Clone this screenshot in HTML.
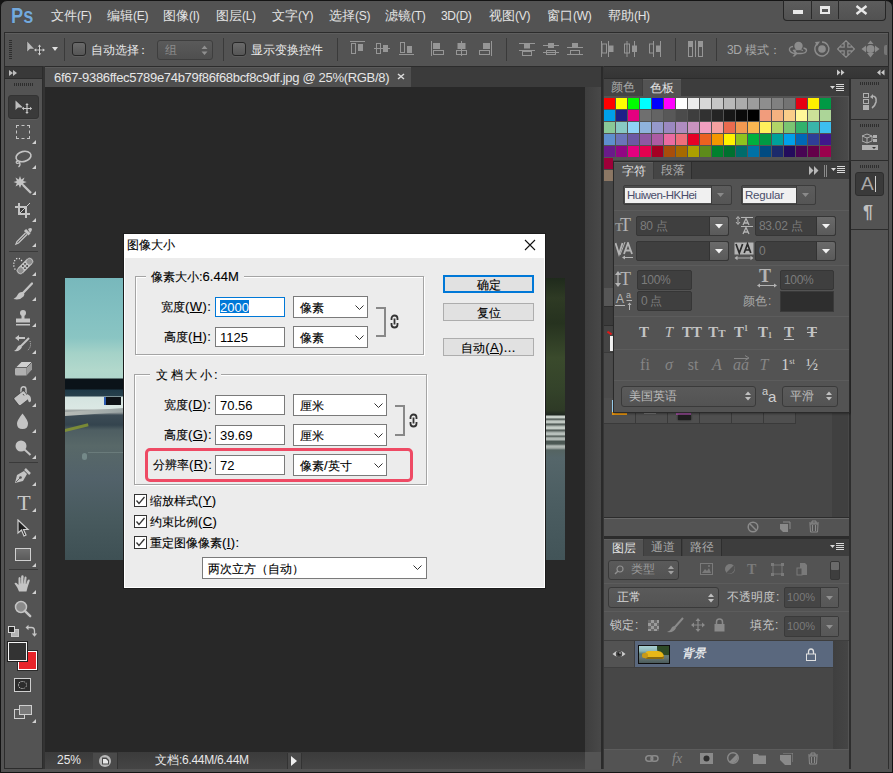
<!DOCTYPE html>
<html><head><meta charset="utf-8"><style>
*{margin:0;padding:0;box-sizing:border-box}
html,body{width:893px;height:773px;overflow:hidden;background:#141414;font-family:"Liberation Sans",sans-serif}
.a{position:absolute}
.menu{position:absolute;top:8px;font-size:13px;color:#e4e4e4;white-space:nowrap;line-height:16px}
.lat{font-family:"Liberation Sans",sans-serif;font-size:12px;letter-spacing:-0.3px}
.otxt{position:absolute;font-size:12px;line-height:20px;color:#e8e8e8;white-space:nowrap}
.cb{width:14px;height:14px;border:1px solid #262626;border-radius:3px;background:linear-gradient(#6a6a6a,#565656);box-shadow:0 1px 0 #5e5e5e}
.tab{height:17px;font-size:12px;line-height:16px;text-align:center;white-space:nowrap}
.dtx{font-size:12px;line-height:16px;color:#000;white-space:nowrap;-webkit-text-stroke:0.12px #000}
.dtx .dl{letter-spacing:0.4px}
.dl{font-family:"Liberation Sans",sans-serif;font-size:13px;line-height:16px;white-space:nowrap}
u{text-decoration-thickness:1px;text-underline-offset:1px}
</style></head><body>
<div class="a" style="left:0;top:0;width:893px;height:773px;background:#535353;border:1px solid #141414;border-radius:7px 7px 0 0"></div>
<div class="a" style="left:11px;top:3px;font:bold 22px/25px 'Liberation Sans',sans-serif;color:#74a9dc;letter-spacing:0px;transform:scaleX(0.83);transform-origin:left;text-shadow:0 0 1px #3a3a3a">Ps</div>
<div class="menu" style="left:51px">文件<span class="lat">(F)</span></div>
<div class="menu" style="left:107px">编辑<span class="lat">(E)</span></div>
<div class="menu" style="left:163px">图像<span class="lat">(I)</span></div>
<div class="menu" style="left:216px">图层<span class="lat">(L)</span></div>
<div class="menu" style="left:272px">文字<span class="lat">(Y)</span></div>
<div class="menu" style="left:329px">选择<span class="lat">(S)</span></div>
<div class="menu" style="left:385px">滤镜<span class="lat">(T)</span></div>
<div class="menu" style="left:441px"><span class="lat">3D(D)</span></div>
<div class="menu" style="left:489px">视图<span class="lat">(V)</span></div>
<div class="menu" style="left:547px">窗口<span class="lat">(W)</span></div>
<div class="menu" style="left:608px">帮助<span class="lat">(H)</span></div>
<div class="a" style="left:783px;top:0px;width:103px;height:21px;border:1px solid #262626;border-top-color:#1a1a1a;border-radius:0 0 4px 4px;background:linear-gradient(#5c5c5c,#525252)"></div>
<div class="a" style="left:811px;top:0;width:1px;height:19px;background:#2a2a2a"></div>
<div class="a" style="left:838px;top:0;width:1px;height:19px;background:#2a2a2a"></div>
<div class="a" style="left:793px;top:10px;width:10px;height:4px;background:#e8e8e8"></div>
<div class="a" style="left:820px;top:6px;width:10px;height:8px;border:2px solid #e8e8e8;border-top-width:3px"></div>
<svg class="a" style="left:855px;top:5px" width="13" height="10"><path d="M1.5 1 L11.5 9 M11.5 1 L1.5 9" stroke="#e8e8e8" stroke-width="2.4"/></svg>
<div class="a" style="left:4px;top:32px;width:885px;height:35px;background:#535353;border:1px solid #2c2c2c"></div>
<div class="a" style="left:5px;top:33px;width:883px;height:1px;background:#5e5e5e"></div>
<div class="a" style="left:9px;top:40px;width:3px;height:20px;background:repeating-linear-gradient(180deg,#2e2e2e 0 1px,transparent 1px 2px)"></div>
<svg class="a" style="left:26px;top:40px" width="20" height="18"><path d="M1 1 L1 12 L4 9 L8.5 9 Z" fill="#bcbcbc" stroke="#3a3a3a" stroke-width="0.4"/><path d="M13.5 6 V14 M9.5 10 H17.5" stroke="#2e2e2e" stroke-width="2.6"/><path d="M13.5 6 V14 M9.5 10 H17.5" stroke="#cfcfcf" stroke-width="1.2"/><path d="M13.5 4.5 L11.8 6.8 H15.2Z M13.5 15.5 L11.8 13.2 H15.2Z M8 10 L10.3 8.3 V11.7Z M19 10 L16.7 8.3 V11.7Z" fill="#cfcfcf"/></svg>
<svg class="a" style="left:52px;top:47px" width="7" height="5"><path d="M0 0 H6 L3 4Z" fill="#e0e0e0"/></svg>
<div class="a" style="left:64px;top:38px;width:1px;height:23px;background:#3a3a3a"></div>
<div class="a cb" style="left:72px;top:42px"></div>
<div class="otxt" style="left:91px;top:40px">自动选择<span style="margin-left:-2px">：</span></div>
<div class="a" style="left:157px;top:40px;width:56px;height:20px;border:1px solid #3e3e3e;border-radius:3px;background:linear-gradient(#5a5a5a,#4f4f4f)"></div>
<div class="otxt" style="left:165px;top:40px;color:#8c8c8c">组</div>
<svg class="a" style="left:201px;top:45px" width="7" height="11"><path d="M0.5 4 L3.5 0.5 L6.5 4Z M0.5 6.5 L3.5 10 L6.5 6.5Z" fill="#909090"/></svg>
<div class="a" style="left:223px;top:38px;width:1px;height:23px;background:#3a3a3a"></div>
<div class="a cb" style="left:232px;top:42px"></div>
<div class="otxt" style="left:251px;top:40px">显示变换控件</div>
<div class="a" style="left:337px;top:38px;width:1px;height:23px;background:#3a3a3a"></div>
<svg class="a" style="left:350px;top:41px" width="17" height="17"><path d="M0 0.5H15" stroke="#969696"/><rect x="1.5" y="2.5" width="4" height="10" fill="none" stroke="#969696"/><rect x="8" y="3" width="5" height="7" fill="#969696"/></svg>
<svg class="a" style="left:374px;top:41px" width="17" height="17"><path d="M0 7.5H16" stroke="#969696"/><rect x="2.5" y="2.5" width="4" height="10" fill="none" stroke="#969696"/><rect x="9" y="4" width="5" height="7" fill="#969696"/></svg>
<svg class="a" style="left:399px;top:41px" width="17" height="17"><path d="M0 13.5H15" stroke="#969696"/><rect x="1.5" y="1.5" width="4" height="10" fill="none" stroke="#969696"/><rect x="8" y="5" width="5" height="7" fill="#969696"/></svg>
<svg class="a" style="left:431px;top:41px" width="17" height="17"><path d="M0.5 0V15" stroke="#969696"/><rect x="2.5" y="9.5" width="10" height="4" fill="none" stroke="#969696"/><rect x="2" y="2" width="7" height="6" fill="#969696"/></svg>
<svg class="a" style="left:455px;top:41px" width="17" height="17"><path d="M6.5 0V15" stroke="#969696"/><rect x="1.5" y="9.5" width="10" height="4" fill="none" stroke="#969696"/><rect x="2.5" y="2" width="8" height="6" fill="#969696"/></svg>
<svg class="a" style="left:479px;top:41px" width="17" height="17"><path d="M12.5 0V15" stroke="#969696"/><rect x="0.5" y="9.5" width="10" height="4" fill="none" stroke="#969696"/><rect x="4" y="2" width="7" height="6" fill="#969696"/></svg>
<svg class="a" style="left:519px;top:41px" width="17" height="17"><path d="M0 2.5H16 M0 9.5H16" stroke="#969696"/><rect x="5" y="3" width="6" height="4.5" fill="#969696"/><rect x="3.5" y="10.5" width="9" height="4" fill="none" stroke="#969696"/></svg>
<svg class="a" style="left:543px;top:41px" width="17" height="17"><path d="M0 4.5H16 M0 11.5H16" stroke="#969696"/><rect x="5" y="2" width="6" height="5" fill="#969696"/><rect x="3.5" y="9.5" width="9" height="4" fill="none" stroke="#969696"/></svg>
<svg class="a" style="left:567px;top:41px" width="17" height="17"><path d="M0 6.5H16 M0 13.5H16" stroke="#969696"/><rect x="5" y="2" width="6" height="4.5" fill="#969696"/><rect x="3.5" y="9.5" width="9" height="4" fill="none" stroke="#969696"/></svg>
<svg class="a" style="left:600px;top:41px" width="17" height="17"><path d="M1.5 0V16 M8.5 0V16" stroke="#969696"/><rect x="2" y="3" width="4.5" height="9" fill="none" stroke="#969696"/><rect x="9" y="4.5" width="4.5" height="6.5" fill="#969696"/></svg>
<svg class="a" style="left:623px;top:41px" width="17" height="17"><path d="M4 0V16 M11.5 0V16" stroke="#969696"/><rect x="1.5" y="3" width="5" height="9" fill="none" stroke="#969696"/><rect x="9" y="4.5" width="5" height="6.5" fill="#969696"/></svg>
<svg class="a" style="left:648px;top:41px" width="17" height="17"><path d="M5.5 0V16 M12.5 0V16" stroke="#969696"/><rect x="1.5" y="3" width="4" height="9" fill="none" stroke="#969696"/><rect x="8" y="4.5" width="4.5" height="6.5" fill="#969696"/></svg>
<div class="a" style="left:506px;top:38px;width:1px;height:23px;background:#3a3a3a"></div>
<div class="a" style="left:675px;top:38px;width:1px;height:23px;background:#3a3a3a"></div>
<svg class="a" style="left:687px;top:40px" width="17" height="18"><rect x="1" y="1" width="5" height="5" fill="#969696"/><rect x="11" y="1" width="5" height="5" fill="#969696"/><rect x="1.5" y="6.5" width="4" height="10" fill="none" stroke="#969696"/><rect x="11.5" y="6.5" width="4" height="10" fill="none" stroke="#969696"/><path d="M8.5 0.5V17" stroke="#969696"/></svg>
<div class="a" style="left:716px;top:38px;width:1px;height:23px;background:#3a3a3a"></div>
<div class="otxt" style="left:727px;top:40px;color:#a8a8a8"><span class="lat" style="font-size:12px">3D </span>模式：</div>
<svg class="a" style="left:788px;top:40px" width="20" height="17"><circle cx="10.5" cy="6" r="4.2" fill="#8c8c8c"/><path d="M5 6.5 Q1 7 1.5 10 Q2.5 13 7 13.5 H13 Q18 13.5 18.5 10.5 Q18.5 8.5 15.5 8" fill="none" stroke="#8c8c8c" stroke-width="1.4"/><path d="M6.5 9.5 L9.5 13.5 L6.5 16.5 H4.5 L7 13.5 L4.5 10Z" fill="#8c8c8c"/><path d="M6.5 10.5 Q10.5 8.5 15 10.5" fill="none" stroke="#8c8c8c" stroke-width="1.2"/></svg>
<svg class="a" style="left:813px;top:40px" width="18" height="18"><path d="M4.2 3.8 A7 7 0 1 0 9 2" fill="none" stroke="#8c8c8c" stroke-width="1.4"/><path d="M2 2 L7 1.5 L4 6Z" fill="#8c8c8c"/><circle cx="9" cy="9" r="3.8" fill="#8c8c8c"/></svg>
<svg class="a" style="left:837px;top:40px" width="18" height="18"><path d="M9 0.7 L12.3 3.8 H10.8 V7.2 H14.2 V5.7 L17.3 9 L14.2 12.3 V10.8 H10.8 V14.2 H12.3 L9 17.3 L5.7 14.2 H7.2 V10.8 H3.8 V12.3 L0.7 9 L3.8 5.7 V7.2 H7.2 V3.8 H5.7Z" fill="none" stroke="#8c8c8c" stroke-width="1.2"/></svg>
<svg class="a" style="left:861px;top:40px" width="19" height="18"><path d="M9.5 0.5 L12.5 4 H6.5Z M9.5 17.5 L13 13 H6Z M0.5 9 L5 5.5 V12.5Z M18.5 9 L14 5.5 V12.5Z" fill="#8c8c8c"/><circle cx="9.5" cy="9" r="4" fill="#8c8c8c"/></svg>
<div class="a" style="left:884px;top:45px;width:3px;height:10px;background:#777;border-radius:2px 0 0 2px"></div>
<div class="a" style="left:4px;top:66px;width:39px;height:703px;background:#535353;border:1px solid #2c2c2c"></div>
<div class="a" style="left:5px;top:67px;width:37px;height:12px;background:#393939;border-bottom:1px solid #2c2c2c"></div>
<svg class="a" style="left:9px;top:70px" width="9" height="6"><path d="M0 0 L4 3 L0 6Z M4 0 L8 3 L4 6Z" fill="#bdbdbd"/></svg>
<div class="a" style="left:14px;top:83px;width:19px;height:3px;background:repeating-linear-gradient(90deg,#2e2e2e 0 1px,transparent 1px 2px)"></div>
<div class="a" style="left:8px;top:95px;width:31px;height:24px;background:#3a3a3a;border:1px solid #333;border-radius:3px;box-shadow:0 1px 0 #5c5c5c"></div>
<svg class="a" style="left:14px;top:100px" width="20" height="14"><path d="M1.5 0.5 L1.5 10 L4 7.5 L9 7.5 Z" fill="#bdbdbd"/><path d="M13 4 V13 M8.5 8.5 H17.5" stroke="#c8c8c8" stroke-width="1.2"/><path d="M13 3 L11.3 5 H14.7Z M13 14 L11.3 12 H14.7Z M8 8.5 L10 6.8 V10.2Z M18 8.5 L16 6.8 V10.2Z" fill="#c8c8c8"/></svg>
<div class="a" style="left:16px;top:125px;width:14px;height:14px;border:1.5px dashed #c4c4c4"></div>
<svg class="a" style="left:32px;top:140px" width="4" height="4"><path d="M4 0 V4 H0Z" fill="#d0d0d0"/></svg>
<svg class="a" style="left:13px;top:149px" width="21" height="19"><ellipse cx="10.5" cy="7.5" rx="7.6" ry="5" transform="rotate(-14 10.5 7.5)" fill="none" stroke="#c4c4c4" stroke-width="1.6"/><path d="M5 12 Q2.5 12.5 3.5 14 Q5 15 6.5 13.5 Q8 16 5.5 18" fill="none" stroke="#c4c4c4" stroke-width="1.3"/></svg>
<svg class="a" style="left:32px;top:165px" width="4" height="4"><path d="M4 0 V4 H0Z" fill="#d0d0d0"/></svg>
<svg class="a" style="left:13px;top:175px" width="20" height="19"><path d="M7 1 L8.3 4.5 L11.5 2.5 L10.2 6 L13.8 7 L10.2 8.3 L11.5 11.5 L8.3 9.8 L7 13 L5.7 9.8 L2.5 11.5 L3.8 8.3 L0.5 7 L3.8 6 L2.5 2.5 L5.7 4.5Z" fill="#c4c4c4"/><path d="M10 10 L18 18" stroke="#c4c4c4" stroke-width="2.3"/></svg>
<svg class="a" style="left:32px;top:191px" width="4" height="4"><path d="M4 0 V4 H0Z" fill="#d0d0d0"/></svg>
<svg class="a" style="left:14px;top:202px" width="17" height="17"><rect x="6" y="6" width="5" height="5" fill="#3c3c3c"/><path d="M6 11 L16 1" stroke="#d8d8d8" stroke-width="0.9"/><rect x="1" y="4" width="12" height="2" fill="#c4c4c4"/><rect x="4" y="1" width="2" height="12" fill="#c4c4c4"/><rect x="4" y="11" width="12" height="2" fill="#c4c4c4"/><rect x="11" y="4" width="2" height="12" fill="#c4c4c4"/></svg>
<svg class="a" style="left:32px;top:218px" width="4" height="4"><path d="M4 0 V4 H0Z" fill="#d0d0d0"/></svg>
<svg class="a" style="left:14px;top:227px" width="19" height="19"><path d="M11 3 L15.5 7.5" stroke="#c4c4c4" stroke-width="3"/><path d="M14 2 Q17 0 18 2 Q18 4 16 6Z" fill="#c4c4c4"/><path d="M11.5 6 L3 14.5 L2 17 L4.5 16 L13 7.5" fill="none" stroke="#c4c4c4" stroke-width="1.3"/></svg>
<svg class="a" style="left:32px;top:243px" width="4" height="4"><path d="M4 0 V4 H0Z" fill="#d0d0d0"/></svg>
<div class="a" style="left:9px;top:251px;width:29px;height:1px;background:#3a3a3a"></div>
<svg class="a" style="left:12px;top:256px" width="22" height="20"><path d="M10 5 Q7 1 4 3 Q1 6 2 11 Q3 14 5 15" fill="none" stroke="#e0e0e0" stroke-width="1.3" stroke-dasharray="1.2 1.6"/><g transform="rotate(-45 13 10)"><rect x="2.5" y="6" width="21" height="8" rx="4" fill="#c4c4c4" stroke="#2e2e2e" stroke-width="0.6"/><rect x="4" y="7.3" width="5.5" height="5.4" rx="2" fill="#8e8e8e"/><rect x="16.5" y="7.3" width="5.5" height="5.4" rx="2" fill="#8e8e8e"/><circle cx="11.5" cy="8.5" r="0.9" fill="#3a3a3a"/><circle cx="14.5" cy="8.5" r="0.9" fill="#3a3a3a"/><circle cx="11.5" cy="11.5" r="0.9" fill="#3a3a3a"/><circle cx="14.5" cy="11.5" r="0.9" fill="#3a3a3a"/></g></svg>
<svg class="a" style="left:32px;top:272px" width="4" height="4"><path d="M4 0 V4 H0Z" fill="#d0d0d0"/></svg>
<svg class="a" style="left:13px;top:282px" width="20" height="19"><path d="M19 1.5 L10 11" stroke="#c4c4c4" stroke-width="2.3" stroke-linecap="round"/><path d="M10 10 Q6 9.5 4.5 13 Q3.5 15.5 0.5 17 Q7 18.5 10.5 14.5 Q12 12.5 11 11Z" fill="#c4c4c4"/></svg>
<svg class="a" style="left:32px;top:297px" width="4" height="4"><path d="M4 0 V4 H0Z" fill="#d0d0d0"/></svg>
<svg class="a" style="left:13px;top:309px" width="20" height="18"><circle cx="10" cy="4" r="3" fill="#c4c4c4"/><rect x="8.5" y="5" width="3" height="5" fill="#c4c4c4"/><rect x="3" y="9.5" width="14" height="4" fill="#c4c4c4"/><rect x="3" y="15" width="14" height="1.5" fill="#c4c4c4"/></svg>
<svg class="a" style="left:32px;top:323px" width="4" height="4"><path d="M4 0 V4 H0Z" fill="#d0d0d0"/></svg>
<svg class="a" style="left:13px;top:335px" width="20" height="18"><path d="M2 3 L6 0 V2 H12 V4 H6 V6Z" fill="#c4c4c4"/><path d="M16 3 L8 11" stroke="#c4c4c4" stroke-width="2"/><path d="M8 10 Q5 10 4 13 Q3 15 1 16 Q7 17 9 12Z" fill="#c4c4c4"/><path d="M17 6 Q19 12 14 16" fill="none" stroke="#c4c4c4" stroke-width="1" stroke-dasharray="1 1.2"/></svg>
<svg class="a" style="left:32px;top:350px" width="4" height="4"><path d="M4 0 V4 H0Z" fill="#d0d0d0"/></svg>
<svg class="a" style="left:14px;top:361px" width="19" height="16"><path d="M7.5 1 H18 L12.5 6.5 H2Z" fill="#cfcfcf"/><path d="M2 6.5 H12.5 V14.5 H2.5 Q1 14.5 1 13 V8Z" fill="#b0b0b0"/><path d="M12.5 6.5 L18 1 V8.5 L12.5 14.5Z" fill="#9a9a9a"/><path d="M2 6.5 H12.5 L18 1" fill="none" stroke="#3a3a3a" stroke-width="0.6"/></svg>
<svg class="a" style="left:32px;top:376px" width="4" height="4"><path d="M4 0 V4 H0Z" fill="#d0d0d0"/></svg>
<svg class="a" style="left:13px;top:386px" width="20" height="19"><path d="M8 9 V3.5 Q8 0.8 10.5 0.8 Q13 0.8 13 3.5 V9" fill="none" stroke="#c4c4c4" stroke-width="1.4"/><g transform="rotate(-38 9 12)"><rect x="2" y="7" width="13" height="10" rx="1.5" fill="#c4c4c4" stroke="#2e2e2e" stroke-width="0.6"/></g><path d="M14 8 Q18 9.5 18 13 L18 15 Q17 17 15.5 15.5 Q15 13 14 11Z" fill="#c4c4c4"/><path d="M10 8 L11 9.5" stroke="#555" stroke-width="1"/></svg>
<svg class="a" style="left:32px;top:403px" width="4" height="4"><path d="M4 0 V4 H0Z" fill="#d0d0d0"/></svg>
<svg class="a" style="left:16px;top:413px" width="13" height="17"><path d="M6.5 0.5 Q1 7.5 1 10.5 Q1 16 6.5 16 Q12 16 12 10.5 Q12 7.5 6.5 0.5Z" fill="#c4c4c4"/></svg>
<svg class="a" style="left:32px;top:429px" width="4" height="4"><path d="M4 0 V4 H0Z" fill="#d0d0d0"/></svg>
<svg class="a" style="left:14px;top:439px" width="18" height="17"><circle cx="7" cy="7" r="5.5" fill="#c4c4c4"/><path d="M10.5 10.5 L16.5 16" stroke="#c4c4c4" stroke-width="2"/></svg>
<svg class="a" style="left:32px;top:455px" width="4" height="4"><path d="M4 0 V4 H0Z" fill="#d0d0d0"/></svg>
<div class="a" style="left:9px;top:462px;width:29px;height:1px;background:#3a3a3a"></div>
<svg class="a" style="left:14px;top:467px" width="18" height="18"><path d="M1 16 L3 8 L10 4 L13 7 L9 14Z" fill="#c4c4c4"/><circle cx="6.5" cy="10.5" r="1.3" fill="#535353"/><path d="M2 15 L6 11" stroke="#535353" stroke-width="0.8"/><path d="M11 2 L16 7" stroke="#c4c4c4" stroke-width="2.5"/></svg>
<svg class="a" style="left:32px;top:482px" width="4" height="4"><path d="M4 0 V4 H0Z" fill="#d0d0d0"/></svg>
<div class="a" style="left:14px;top:493px;width:20px;font:22px/20px 'Liberation Serif',serif;color:#c8c8c8;text-align:center">T</div>
<svg class="a" style="left:32px;top:508px" width="4" height="4"><path d="M4 0 V4 H0Z" fill="#d0d0d0"/></svg>
<svg class="a" style="left:17px;top:519px" width="13" height="18"><path d="M1 1 L1 14 L4.5 11 L7 17 L9 16 L6.5 10.5 L11 10.5Z" fill="#202020" stroke="#cfcfcf" stroke-width="1.2"/></svg>
<svg class="a" style="left:32px;top:535px" width="4" height="4"><path d="M4 0 V4 H0Z" fill="#d0d0d0"/></svg>
<div class="a" style="left:15px;top:548px;width:16px;height:13px;border:1.5px solid #d0d0d0;background:linear-gradient(#707070,#5a5a5a)"></div>
<svg class="a" style="left:32px;top:563px" width="4" height="4"><path d="M4 0 V4 H0Z" fill="#d0d0d0"/></svg>
<div class="a" style="left:9px;top:569px;width:29px;height:1px;background:#3a3a3a"></div>
<svg class="a" style="left:14px;top:575px" width="18" height="18"><path d="M5 16.5 L3.5 13 Q2 10.5 0.5 8.5 Q1 7.3 2.5 8 L4.5 10 L4.5 3.5 Q4.5 2 5.5 2 Q6.5 2 6.6 3.5 L6.8 8.5 L7.2 1.5 Q7.4 0.3 8.5 0.3 Q9.6 0.4 9.6 1.5 L9.6 8.5 L10.5 2.5 Q10.8 1.4 11.8 1.6 Q12.7 1.9 12.5 3 L12 9 L13.8 5 Q14.5 4.2 15.3 4.6 Q16 5.2 15.6 6.2 L13.5 12.5 L12.5 16.5Z" fill="#c4c4c4"/><path d="M6.8 8.5 V4 M9.6 8.5 V3 M12 9 L12.3 4.5" stroke="#777" stroke-width="0.5"/></svg>
<svg class="a" style="left:32px;top:590px" width="4" height="4"><path d="M4 0 V4 H0Z" fill="#d0d0d0"/></svg>
<svg class="a" style="left:14px;top:600px" width="18" height="18"><circle cx="7" cy="7" r="5.5" fill="#8a8a8a" stroke="#c4c4c4" stroke-width="1.5"/><path d="M10.8 10.8 L16.2 16.2" stroke="#c4c4c4" stroke-width="2.4" stroke-linecap="round"/></svg>
<div class="a" style="left:11px;top:629px;width:8px;height:8px;background:#b4b4b4;border:1px solid #c8c8c8"></div>
<div class="a" style="left:8px;top:626px;width:7px;height:7px;background:#2a2a2a;border:1px solid #d8d8d8"></div>
<svg class="a" style="left:25px;top:624px" width="12" height="14"><path d="M3 3.5 H6.5 Q9.5 3.5 9.5 7 V10" fill="none" stroke="#c4c4c4" stroke-width="1.3"/><path d="M0.5 3.5 L3.5 0.8 V6.2Z M6.8 9.5 H12.2 L9.5 12.8Z" fill="#c4c4c4"/></svg>
<div class="a" style="left:18px;top:651px;width:19px;height:19px;background:#e8242a;border:1px solid #fff;outline:1px solid #2a2a2a"></div>
<div class="a" style="left:8px;top:642px;width:19px;height:19px;background:#333;border:1.5px solid #f4f4f4;outline:1px solid #202020"></div>
<div class="a" style="left:14px;top:678px;width:17px;height:14px;border:1px solid #cfcfcf;background:#2c2c2c"></div>
<div class="a" style="left:18px;top:681px;width:9px;height:8px;border:1px dotted #dcdcdc;border-radius:50%"></div>
<div class="a" style="left:14px;top:709px;width:11px;height:10px;border:1px solid #cfcfcf;background:#5a5a5a"></div>
<div class="a" style="left:19px;top:705px;width:13px;height:10px;border:1px solid #cfcfcf;background:#7a7a7a"></div>
<svg class="a" style="left:32px;top:719px" width="4" height="4"><path d="M4 0 V4 H0Z" fill="#d0d0d0"/></svg>
<div class="a" style="left:44px;top:66px;width:557px;height:21px;background:#3b3b3b;border-top:1px solid #2c2c2c"></div>
<div class="a" style="left:45px;top:67px;width:366px;height:20px;background:#4f4f4f;border-top:1px solid #5a5a5a"></div>
<div class="a" style="left:54px;top:70px;font-size:13px;line-height:15px;color:#e6e6e6;white-space:nowrap;letter-spacing:-0.31px">6f67-9386ffec5789e74b79f86f68bcf8c9df.jpg @ 25%(RGB/8)</div>
<svg class="a" style="left:397px;top:73px" width="8" height="7"><path d="M1 1 L7 6 M7 1 L1 6" stroke="#dcdcdc" stroke-width="1.5"/></svg>
<div class="a" style="left:43px;top:66px;width:2px;height:703px;background:#333"></div>
<div class="a" style="left:45px;top:87px;width:540px;height:665px;background:#282828"></div>
<div class="a" style="left:585px;top:87px;width:16px;height:665px;background:linear-gradient(90deg,#3e3e3e,#484848)"></div>
<div class="a" style="left:45px;top:752px;width:540px;height:17px;background:linear-gradient(#3b3b3b,#454545)"></div>
<div class="a" style="left:585px;top:752px;width:16px;height:17px;background:#545454"></div>
<div class="a" style="left:57px;top:753px;font-size:12px;line-height:15px;color:#e8e8e8">25%</div>
<div class="a" style="left:93px;top:753px;width:24px;height:16px;background:#4a4a4a"></div>
<svg class="a" style="left:98px;top:754px" width="14" height="14"><circle cx="7" cy="7" r="6" fill="#b8b8b8"/><path d="M4 3.5 H8.5 L11 6 V10.5 H4Z" fill="#4a4a4a"/><path d="M5 5 H8 L10 7 V9.5 H5Z" fill="#e8e8e8"/></svg>
<div class="a" style="left:117px;top:752px;width:1px;height:17px;background:#333"></div>
<div class="a" style="left:155px;top:753px;font-size:12px;line-height:15px;color:#e8e8e8;white-space:nowrap">文档<span class="lat">:6.44M/6.44M</span></div>
<div class="a" style="left:287px;top:753px;width:15px;height:16px;background:#4a4a4a;border-left:1px solid #333;border-right:1px solid #333"></div>
<svg class="a" style="left:291px;top:756px" width="7" height="10"><path d="M0 0 L6 5 L0 10Z" fill="#f0f0f0"/></svg>
<div class="a" style="left:601px;top:66px;width:3px;height:703px;background:#2a2a2a;border-right:1px solid #363636"></div>
<div class="a" style="left:604px;top:66px;width:245px;height:703px;background:#484848"></div>
<div class="a" style="left:604px;top:66px;width:285px;height:12px;background:linear-gradient(#3a3a3a,#353535);border-top:1px solid #2a2a2a"></div>
<svg class="a" style="left:837px;top:69px" width="8" height="7"><path d="M0 0.5 L3.5 3.5 L0 6.5Z M4 0.5 L7.5 3.5 L4 6.5Z" fill="#c8c8c8"/></svg>
<svg class="a" style="left:877px;top:69px" width="8" height="7"><path d="M3.5 0.5 L0 3.5 L3.5 6.5Z M7.5 0.5 L4 3.5 L7.5 6.5Z" fill="#c8c8c8"/></svg>
<div class="a" style="left:849px;top:78px;width:2px;height:691px;background:#2e2e2e"></div>
<div class="a" style="left:604px;top:78px;width:245px;height:18px;background:#3d3d3d;border-top:1px solid #2c2c2c"></div>
<div class="a tab" style="left:604px;top:79px;width:38px;background:#444;color:#a8a8a8">颜色</div>
<div class="a tab" style="left:643px;top:79px;width:38px;background:#535353;color:#e4e4e4;border-top:1px solid #5e5e5e">色板</div>
<svg class="a" style="left:830px;top:84px" width="15" height="9"><path d="M0 2 H5 L2.5 5Z" fill="#d8d8d8"/><rect x="6" y="0" width="8" height="1" fill="#d8d8d8"/><rect x="6" y="2" width="8" height="1" fill="#d8d8d8"/><rect x="6" y="4" width="8" height="1" fill="#d8d8d8"/><rect x="6" y="6" width="8" height="1" fill="#d8d8d8"/></svg>
<div class="a" style="left:604px;top:96px;width:245px;height:64px;background:#535353"></div>
<div class="a" style="left:831px;top:97px;width:17px;height:63px;background:linear-gradient(90deg,#404040,#4a4a4a)"></div>
<div class="a" style="left:604px;top:98px;width:11px;height:11px;background:#ff0000"></div>
<div class="a" style="left:616px;top:98px;width:11px;height:11px;background:#ffff00"></div>
<div class="a" style="left:628px;top:98px;width:11px;height:11px;background:#00ff00"></div>
<div class="a" style="left:640px;top:98px;width:11px;height:11px;background:#00ffff"></div>
<div class="a" style="left:652px;top:98px;width:11px;height:11px;background:#0000ff"></div>
<div class="a" style="left:664px;top:98px;width:11px;height:11px;background:#ff00ff"></div>
<div class="a" style="left:676px;top:98px;width:11px;height:11px;background:#ffffff"></div>
<div class="a" style="left:688px;top:98px;width:11px;height:11px;background:#ebebeb"></div>
<div class="a" style="left:700px;top:98px;width:11px;height:11px;background:#d7d7d7"></div>
<div class="a" style="left:712px;top:98px;width:11px;height:11px;background:#c6c6c6"></div>
<div class="a" style="left:724px;top:98px;width:11px;height:11px;background:#b9b9b9"></div>
<div class="a" style="left:736px;top:98px;width:11px;height:11px;background:#ababab"></div>
<div class="a" style="left:748px;top:98px;width:11px;height:11px;background:#9c9c9c"></div>
<div class="a" style="left:760px;top:98px;width:11px;height:11px;background:#8e8e8e"></div>
<div class="a" style="left:772px;top:98px;width:11px;height:11px;background:#808080"></div>
<div class="a" style="left:784px;top:98px;width:11px;height:11px;background:#737373"></div>
<div class="a" style="left:796px;top:98px;width:11px;height:11px;background:#e60012"></div>
<div class="a" style="left:808px;top:98px;width:11px;height:11px;background:#fff100"></div>
<div class="a" style="left:820px;top:98px;width:11px;height:11px;background:#009944"></div>
<div class="a" style="left:604px;top:110px;width:11px;height:11px;background:#00a0e9"></div>
<div class="a" style="left:616px;top:110px;width:11px;height:11px;background:#1d2088"></div>
<div class="a" style="left:628px;top:110px;width:11px;height:11px;background:#e4007f"></div>
<div class="a" style="left:640px;top:110px;width:11px;height:11px;background:#6f6f6f"></div>
<div class="a" style="left:652px;top:110px;width:11px;height:11px;background:#646464"></div>
<div class="a" style="left:664px;top:110px;width:11px;height:11px;background:#585858"></div>
<div class="a" style="left:676px;top:110px;width:11px;height:11px;background:#4b4b4b"></div>
<div class="a" style="left:688px;top:110px;width:11px;height:11px;background:#3e3e3e"></div>
<div class="a" style="left:700px;top:110px;width:11px;height:11px;background:#313131"></div>
<div class="a" style="left:712px;top:110px;width:11px;height:11px;background:#242424"></div>
<div class="a" style="left:724px;top:110px;width:11px;height:11px;background:#171717"></div>
<div class="a" style="left:736px;top:110px;width:11px;height:11px;background:#0a0a0a"></div>
<div class="a" style="left:748px;top:110px;width:11px;height:11px;background:#000000"></div>
<div class="a" style="left:760px;top:110px;width:11px;height:11px;background:#f19c7c"></div>
<div class="a" style="left:772px;top:110px;width:11px;height:11px;background:#f5b280"></div>
<div class="a" style="left:784px;top:110px;width:11px;height:11px;background:#facd89"></div>
<div class="a" style="left:796px;top:110px;width:11px;height:11px;background:#fff799"></div>
<div class="a" style="left:808px;top:110px;width:11px;height:11px;background:#cce198"></div>
<div class="a" style="left:820px;top:110px;width:11px;height:11px;background:#acd598"></div>
<div class="a" style="left:604px;top:122px;width:11px;height:11px;background:#89c997"></div>
<div class="a" style="left:616px;top:122px;width:11px;height:11px;background:#88cac3"></div>
<div class="a" style="left:628px;top:122px;width:11px;height:11px;background:#8fd3f5"></div>
<div class="a" style="left:640px;top:122px;width:11px;height:11px;background:#8fb3dc"></div>
<div class="a" style="left:652px;top:122px;width:11px;height:11px;background:#9599cb"></div>
<div class="a" style="left:664px;top:122px;width:11px;height:11px;background:#9b88c0"></div>
<div class="a" style="left:676px;top:122px;width:11px;height:11px;background:#af8cc0"></div>
<div class="a" style="left:688px;top:122px;width:11px;height:11px;background:#c993bf"></div>
<div class="a" style="left:700px;top:122px;width:11px;height:11px;background:#f29fc0"></div>
<div class="a" style="left:712px;top:122px;width:11px;height:11px;background:#f5a0a0"></div>
<div class="a" style="left:724px;top:122px;width:11px;height:11px;background:#eb6b4f"></div>
<div class="a" style="left:736px;top:122px;width:11px;height:11px;background:#f29951"></div>
<div class="a" style="left:748px;top:122px;width:11px;height:11px;background:#f8b551"></div>
<div class="a" style="left:760px;top:122px;width:11px;height:11px;background:#fff05c"></div>
<div class="a" style="left:772px;top:122px;width:11px;height:11px;background:#b2d467"></div>
<div class="a" style="left:784px;top:122px;width:11px;height:11px;background:#7ac472"></div>
<div class="a" style="left:796px;top:122px;width:11px;height:11px;background:#32b16c"></div>
<div class="a" style="left:808px;top:122px;width:11px;height:11px;background:#39b5aa"></div>
<div class="a" style="left:820px;top:122px;width:11px;height:11px;background:#3cbef0"></div>
<div class="a" style="left:604px;top:134px;width:11px;height:11px;background:#5e8fce"></div>
<div class="a" style="left:616px;top:134px;width:11px;height:11px;background:#6b74b9"></div>
<div class="a" style="left:628px;top:134px;width:11px;height:11px;background:#6c59a3"></div>
<div class="a" style="left:640px;top:134px;width:11px;height:11px;background:#8e58a2"></div>
<div class="a" style="left:652px;top:134px;width:11px;height:11px;background:#ad5ba3"></div>
<div class="a" style="left:664px;top:134px;width:11px;height:11px;background:#eb6ba1"></div>
<div class="a" style="left:676px;top:134px;width:11px;height:11px;background:#ee6f7b"></div>
<div class="a" style="left:688px;top:134px;width:11px;height:11px;background:#e60026"></div>
<div class="a" style="left:700px;top:134px;width:11px;height:11px;background:#eb6120"></div>
<div class="a" style="left:712px;top:134px;width:11px;height:11px;background:#f39800"></div>
<div class="a" style="left:724px;top:134px;width:11px;height:11px;background:#fff100"></div>
<div class="a" style="left:736px;top:134px;width:11px;height:11px;background:#8fc31f"></div>
<div class="a" style="left:748px;top:134px;width:11px;height:11px;background:#00b03e"></div>
<div class="a" style="left:760px;top:134px;width:11px;height:11px;background:#009944"></div>
<div class="a" style="left:772px;top:134px;width:11px;height:11px;background:#00a19a"></div>
<div class="a" style="left:784px;top:134px;width:11px;height:11px;background:#00a0e9"></div>
<div class="a" style="left:796px;top:134px;width:11px;height:11px;background:#0068b7"></div>
<div class="a" style="left:808px;top:134px;width:11px;height:11px;background:#2e3e97"></div>
<div class="a" style="left:820px;top:134px;width:11px;height:11px;background:#40178b"></div>
<div class="a" style="left:604px;top:146px;width:11px;height:11px;background:#6a1b8a"></div>
<div class="a" style="left:616px;top:146px;width:11px;height:11px;background:#920783"></div>
<div class="a" style="left:628px;top:146px;width:11px;height:11px;background:#e4007f"></div>
<div class="a" style="left:640px;top:146px;width:11px;height:11px;background:#e5004f"></div>
<div class="a" style="left:652px;top:146px;width:11px;height:11px;background:#a40023"></div>
<div class="a" style="left:664px;top:146px;width:11px;height:11px;background:#a84e0b"></div>
<div class="a" style="left:676px;top:146px;width:11px;height:11px;background:#a66a00"></div>
<div class="a" style="left:688px;top:146px;width:11px;height:11px;background:#aba000"></div>
<div class="a" style="left:700px;top:146px;width:11px;height:11px;background:#5d8b1b"></div>
<div class="a" style="left:712px;top:146px;width:11px;height:11px;background:#00812e"></div>
<div class="a" style="left:724px;top:146px;width:11px;height:11px;background:#00702f"></div>
<div class="a" style="left:736px;top:146px;width:11px;height:11px;background:#006c6b"></div>
<div class="a" style="left:748px;top:146px;width:11px;height:11px;background:#0071a6"></div>
<div class="a" style="left:760px;top:146px;width:11px;height:11px;background:#014b81"></div>
<div class="a" style="left:772px;top:146px;width:11px;height:11px;background:#1c2a6b"></div>
<div class="a" style="left:784px;top:146px;width:11px;height:11px;background:#230c5c"></div>
<div class="a" style="left:796px;top:146px;width:11px;height:11px;background:#480553"></div>
<div class="a" style="left:808px;top:146px;width:11px;height:11px;background:#640049"></div>
<div class="a" style="left:820px;top:146px;width:11px;height:11px;background:#9b004d"></div>
<div class="a" style="left:604px;top:158px;width:9px;height:11px;background:#9e0039"></div>
<div class="a" style="left:604px;top:170px;width:9px;height:11px;background:#8c7764"></div>
<div class="a" style="left:604px;top:160px;width:245px;height:380px;background:#474747"></div>
<div class="a" style="left:604px;top:158px;width:9px;height:11px;background:#9e0039"></div>
<div class="a" style="left:604px;top:170px;width:9px;height:11px;background:#8c7764"></div>
<div class="a" style="left:832px;top:412px;width:16px;height:105px;background:#404040"></div>
<div class="a" style="left:604px;top:398px;width:32px;height:26px;border-right:1px solid #3a3a3a;border-bottom:1px solid #3a3a3a;background:#4f4f4f"></div>
<div class="a" style="left:636px;top:398px;width:32px;height:26px;border-right:1px solid #3a3a3a;border-bottom:1px solid #3a3a3a;background:#4f4f4f"></div>
<div class="a" style="left:668px;top:398px;width:32px;height:26px;border-right:1px solid #3a3a3a;border-bottom:1px solid #3a3a3a;background:#4f4f4f"></div>
<div class="a" style="left:700px;top:398px;width:32px;height:26px;border-right:1px solid #3a3a3a;border-bottom:1px solid #3a3a3a;background:#4f4f4f"></div>
<div class="a" style="left:732px;top:398px;width:32px;height:26px;border-right:1px solid #3a3a3a;border-bottom:1px solid #3a3a3a;background:#4f4f4f"></div>
<div class="a" style="left:764px;top:398px;width:32px;height:26px;border-right:1px solid #3a3a3a;border-bottom:1px solid #3a3a3a;background:#4f4f4f"></div>
<div class="a" style="left:604px;top:182px;width:9px;height:106px;background:#474747"></div>
<div class="a" style="left:604px;top:288px;width:9px;height:18px;background:#565656"></div>
<div class="a" style="left:604px;top:306px;width:9px;height:1px;background:#2e2e2e"></div>
<div class="a" style="left:604px;top:307px;width:9px;height:18px;background:#3b3b3b"></div>
<div class="a" style="left:604px;top:325px;width:9px;height:1px;background:#2e2e2e"></div>
<div class="a" style="left:604px;top:326px;width:9px;height:26px;background:#454545"></div>
<div class="a" style="left:610px;top:336px;width:3px;height:15px;background:#f0f0f0"></div>
<div class="a" style="left:607px;top:332px;width:5px;height:2px;background:#e01818;transform:rotate(35deg)"></div>
<div class="a" style="left:604px;top:352px;width:9px;height:1px;background:#3a3a3a"></div>
<div class="a" style="left:604px;top:353px;width:9px;height:45px;background:#4b4b4b"></div>
<div class="a" style="left:612px;top:400px;width:1px;height:12px;background:#9ad0f0"></div>
<div class="a" style="left:612px;top:412px;width:15px;height:3px;background:#e09010"></div>
<div class="a" style="left:676px;top:413px;width:15px;height:2px;background:#a050a0"></div>
<div class="a" style="left:678px;top:415px;width:13px;height:5px;background:#1e1e1e;box-shadow:0 0 2px #111"></div>
<div class="a" style="left:644px;top:413px;width:12px;height:1px;background:#7a7a7a"></div>
<div class="a" style="left:708px;top:411px;width:14px;height:2px;background:#3a3a3a;border-radius:0 0 2px 2px"></div>
<div class="a" style="left:740px;top:411px;width:14px;height:2px;background:#3a3a3a;border-radius:0 0 2px 2px"></div>
<div class="a" style="left:772px;top:411px;width:14px;height:2px;background:#3a3a3a;border-radius:0 0 2px 2px"></div>
<div class="a" style="left:604px;top:517px;width:245px;height:21px;background:#2c2c2c"></div>
<div class="a" style="left:604px;top:518px;width:245px;height:18px;background:#535353;border-top:1px solid #686868"></div>
<svg class="a" style="left:747px;top:521px" width="12" height="12"><circle cx="6" cy="6" r="4.8" fill="none" stroke="#8a8a8a" stroke-width="1.5"/><path d="M2.8 2.8 L9.2 9.2" stroke="#8a8a8a" stroke-width="1.5"/></svg>
<svg class="a" style="left:779px;top:521px" width="12" height="12"><path d="M1 3 H9 V11 H4 L1 8Z" fill="#8a8a8a"/><path d="M4 1 H11 V8" fill="none" stroke="#8a8a8a"/></svg>
<svg class="a" style="left:808px;top:520px" width="12" height="13"><path d="M1 3 H11 M4 3 V1 H8 V3" fill="none" stroke="#8a8a8a"/><path d="M2 4 H10 L9.5 12 H2.5Z" fill="none" stroke="#8a8a8a"/><path d="M4.5 5 V11 M7.5 5 V11" stroke="#8a8a8a"/></svg>
<div class="a" style="left:613px;top:161px;width:237px;height:252px;background:#535353;border:1px solid #2a2a2a;box-shadow:1px 1px 2px rgba(0,0,0,0.35)"></div>
<div class="a" style="left:614px;top:162px;width:235px;height:17px;background:#3c3c3c"></div>
<div class="a tab" style="left:614px;top:162px;width:39px;height:17px;background:#535353;color:#e4e4e4;border-top:1px solid #5e5e5e">字符</div>
<div class="a tab" style="left:654px;top:162px;width:38px;height:17px;background:#454545;color:#a8a8a8;border-right:1px solid #2e2e2e">段落</div>
<svg class="a" style="left:809px;top:166px" width="10" height="9"><path d="M0 0 L4.5 4.5 L0 9Z M5 0 L9.5 4.5 L5 9Z" fill="#b8b8b8"/></svg>
<div class="a" style="left:824px;top:165px;width:3px;height:12px;border-left:1px solid #8a8a8a;border-right:1px solid #8a8a8a"></div>
<svg class="a" style="left:831px;top:166px" width="15" height="9"><path d="M0 2 H5 L2.5 5Z" fill="#d8d8d8"/><rect x="6" y="0" width="8" height="1" fill="#d8d8d8"/><rect x="6" y="2" width="8" height="1" fill="#d8d8d8"/><rect x="6" y="4" width="8" height="1" fill="#d8d8d8"/><rect x="6" y="6" width="8" height="1" fill="#d8d8d8"/></svg>
<div class="a" style="left:623px;top:185px;width:109px;height:20px;border:1px solid #3c3c3c;border-radius:2px;background:#4c4c4c"></div>
<div class="a" style="left:625px;top:188px;width:86px;height:15px;background:#f0f0f0"></div>
<div class="a" style="left:627px;top:188px;font-size:11.5px;line-height:15px;color:#4a4e6a;white-space:nowrap;letter-spacing:-0.5px">Huiwen-HKHei</div>
<div class="a" style="left:711px;top:186px;width:20px;height:18px;background:linear-gradient(#5c5c5c,#555);border-left:1px solid #3c3c3c;border-radius:0 2px 2px 0"></div>
<svg class="a" style="left:717px;top:193px" width="7" height="4"><path d="M0 0 H7 L3.5 4Z" fill="#8a8a8a"/></svg>
<div class="a" style="left:741px;top:185px;width:75px;height:20px;border:1px solid #3c3c3c;border-radius:2px;background:#4c4c4c"></div>
<div class="a" style="left:743px;top:188px;width:53px;height:15px;background:#f0f0f0"></div>
<div class="a" style="left:745px;top:188px;font-size:11.5px;line-height:15px;color:#4a4e6a;white-space:nowrap;letter-spacing:-0.2px">Regular</div>
<div class="a" style="left:796px;top:186px;width:19px;height:18px;background:linear-gradient(#5c5c5c,#555);border-left:1px solid #3c3c3c;border-radius:0 2px 2px 0"></div>
<svg class="a" style="left:802px;top:193px" width="7" height="4"><path d="M0 0 H7 L3.5 4Z" fill="#8a8a8a"/></svg>
<div class="a" style="left:614px;top:210px;width:235px;height:1px;background:#3e3e3e;border-bottom:1px solid #5c5c5c"></div>
<div class="a" style="left:636px;top:216px;width:93px;height:20px;background:#3f3f3f;border:1px solid #363636;border-radius:2px"></div>
<div class="a" style="left:640px;top:218px;font-size:12px;line-height:16px;color:#7c7c7c;white-space:nowrap"><span class="lat">80 </span>点</div>
<div class="a" style="left:709px;top:217px;width:19px;height:18px;background:linear-gradient(#6a6a6a,#5a5a5a);border-left:1px solid #333;border-radius:0 2px 2px 0"></div>
<svg class="a" style="left:715px;top:224px" width="8" height="5"><path d="M0 0 H8 L4 4.5Z" fill="#f2f2f2"/></svg>
<div class="a" style="left:755px;top:216px;width:81px;height:20px;background:#3f3f3f;border:1px solid #363636;border-radius:2px"></div>
<div class="a" style="left:759px;top:218px;font-size:12px;line-height:16px;color:#7c7c7c;white-space:nowrap"><span class="lat">83.02 </span>点</div>
<div class="a" style="left:816px;top:217px;width:19px;height:18px;background:linear-gradient(#6a6a6a,#5a5a5a);border-left:1px solid #333;border-radius:0 2px 2px 0"></div>
<svg class="a" style="left:822px;top:224px" width="8" height="5"><path d="M0 0 H8 L4 4.5Z" fill="#f2f2f2"/></svg>
<div class="a" style="left:636px;top:241px;width:93px;height:20px;background:#3f3f3f;border:1px solid #363636;border-radius:2px"></div>
<div class="a" style="left:709px;top:242px;width:19px;height:18px;background:linear-gradient(#6a6a6a,#5a5a5a);border-left:1px solid #333;border-radius:0 2px 2px 0"></div>
<svg class="a" style="left:715px;top:249px" width="8" height="5"><path d="M0 0 H8 L4 4.5Z" fill="#f2f2f2"/></svg>
<div class="a" style="left:755px;top:241px;width:81px;height:20px;background:#3f3f3f;border:1px solid #363636;border-radius:2px"></div>
<div class="a" style="left:759px;top:243px;font-size:12px;line-height:16px;color:#7c7c7c;white-space:nowrap"><span class="lat">0</span></div>
<div class="a" style="left:816px;top:242px;width:19px;height:18px;background:linear-gradient(#6a6a6a,#5a5a5a);border-left:1px solid #333;border-radius:0 2px 2px 0"></div>
<svg class="a" style="left:822px;top:249px" width="8" height="5"><path d="M0 0 H8 L4 4.5Z" fill="#f2f2f2"/></svg>
<div class="a" style="left:615px;top:221px;font:bold 12px/12px 'Liberation Serif',serif;color:#999">T</div>
<div class="a" style="left:620px;top:216px;font:18px/18px 'Liberation Serif',serif;color:#b4b4b4">T</div>
<svg class="a" style="left:735px;top:216px" width="19" height="20"><path d="M3 1 V8 M1 3 L3 0.5 L5 3 M1 6 L3 8.5 L5 6" fill="none" stroke="#b4b4b4" stroke-width="1"/><path d="M6 1.5 H18" stroke="#b4b4b4"/><path d="M8 9 L11 2.5 L14 9 M9 7 H13" fill="none" stroke="#b4b4b4" stroke-width="1.3"/><path d="M8 18 L11 11.5 L14 18 M9 16 H13" fill="none" stroke="#b4b4b4" stroke-width="1.3"/><path d="M6 10.5 H18" stroke="#b4b4b4"/></svg>
<svg class="a" style="left:615px;top:242px" width="20" height="18"><path d="M0.5 1 L4 12 L7.5 1" fill="none" stroke="#b4b4b4" stroke-width="1.8"/><path d="M10 0 L5 13" stroke="#b4b4b4" stroke-width="1"/><path d="M9 12 L13 1 L17 12 M10.5 8.5 H15.5" fill="none" stroke="#b4b4b4" stroke-width="1.8"/><path d="M8 15.5 H18" stroke="#b4b4b4"/><path d="M7 15.5 L10 13.5 V17.5Z" fill="#b4b4b4"/></svg>
<svg class="a" style="left:734px;top:242px" width="20" height="19"><rect x="0.5" y="0.5" width="19" height="12" fill="#b4b4b4"/><path d="M2 2 L5.3 11 L8.6 2 M10.2 11 L13.5 2 L16.8 11 M11.5 8 H15.5" fill="none" stroke="#2a2a2a" stroke-width="1.7"/><path d="M3 16 H17" stroke="#b4b4b4"/><path d="M0.5 16 L3.5 13.8 V18.2Z M19.5 16 L16.5 13.8 V18.2Z" fill="#b4b4b4"/></svg>
<div class="a" style="left:614px;top:265px;width:235px;height:1px;background:#3e3e3e;border-bottom:1px solid #5c5c5c"></div>
<div class="a" style="left:637px;top:270px;width:55px;height:20px;background:#3f3f3f;border:1px solid #363636;border-radius:2px"></div>
<div class="a" style="left:641px;top:272px;font-size:12px;line-height:16px;color:#7c7c7c;white-space:nowrap"><span class="lat">100%</span></div>
<div class="a" style="left:780px;top:270px;width:54px;height:20px;background:#3f3f3f;border:1px solid #363636;border-radius:2px"></div>
<div class="a" style="left:784px;top:272px;font-size:12px;line-height:16px;color:#7c7c7c;white-space:nowrap"><span class="lat">100%</span></div>
<div class="a" style="left:637px;top:291px;width:55px;height:20px;background:#3f3f3f;border:1px solid #363636;border-radius:2px"></div>
<div class="a" style="left:641px;top:293px;font-size:12px;line-height:16px;color:#7c7c7c;white-space:nowrap"><span class="lat">0 </span>点</div>
<div class="a" style="left:780px;top:291px;width:54px;height:21px;background:#2e2e2e;border:1px solid #3a3a3a"></div>
<div class="a" style="left:743px;top:293px;font-size:12px;line-height:16px;color:#a8a8a8;white-space:nowrap">颜色<span style="font-family:'Liberation Sans',sans-serif;margin-left:1px">:</span></div>
<svg class="a" style="left:615px;top:271px" width="6" height="16"><path d="M3 1 V15" stroke="#b4b4b4" stroke-width="1.2"/><path d="M0 4 L3 0 L6 4Z M0 12 L3 16 L6 12Z" fill="#b4b4b4"/></svg>
<div class="a" style="left:620px;top:269px;font:18px/20px 'Liberation Serif',serif;color:#b4b4b4">T</div>
<svg class="a" style="left:756px;top:268px" width="22" height="20"><path d="M6 1.5 H16" stroke="#b4b4b4" stroke-width="0"/></svg>
<div class="a" style="left:759px;top:266px;font:bold 18px/20px 'Liberation Serif',serif;color:#b4b4b4">T</div>
<svg class="a" style="left:757px;top:283px" width="20" height="5"><path d="M2 2.5 H18" stroke="#b4b4b4"/><path d="M0 2.5 L3 0.5 V4.5Z M20 2.5 L17 0.5 V4.5Z" fill="#b4b4b4"/></svg>
<div class="a" style="left:616px;top:293px;font:12px/12px 'Liberation Sans',sans-serif;color:#b4b4b4">A</div>
<div class="a" style="left:615px;top:305px;width:10px;height:1px;background:#b4b4b4"></div>
<div class="a" style="left:626px;top:291px;font:9px/9px 'Liberation Sans',sans-serif;color:#b4b4b4">a</div>
<svg class="a" style="left:626px;top:300px" width="7" height="10"><path d="M0.5 0.5 H6" stroke="#b4b4b4"/><path d="M3.5 3 V10" stroke="#b4b4b4"/><path d="M1.5 5 L3.5 2.5 L5.5 5Z" fill="#b4b4b4"/></svg>
<div class="a" style="left:614px;top:316px;width:235px;height:1px;background:#3e3e3e;border-bottom:1px solid #5c5c5c"></div>
<div class="a" style="left:629px;top:324px;width:30px;text-align:center;font: bold 15px/17px 'Liberation Serif',serif;color:#c4c4c4;white-space:nowrap">T</div>
<div class="a" style="left:654px;top:324px;width:30px;text-align:center;font:italic normal 15px/17px 'Liberation Serif',serif;color:#c4c4c4;white-space:nowrap">T</div>
<div class="a" style="left:677px;top:324px;width:30px;text-align:center;font: bold 15px/17px 'Liberation Serif',serif;color:#c4c4c4;white-space:nowrap">TT</div>
<div class="a" style="left:702px;top:324px;width:30px;text-align:center;font: bold 15px/17px 'Liberation Serif',serif;color:#c4c4c4;white-space:nowrap">T<span style="font-size:11px">T</span></div>
<div class="a" style="left:726px;top:324px;width:30px;text-align:center;font: bold 15px/17px 'Liberation Serif',serif;color:#c4c4c4;white-space:nowrap">T<span style="font-size:8px;position:relative;top:-6px;vertical-align:baseline">1</span></div>
<div class="a" style="left:750px;top:324px;width:30px;text-align:center;font: bold 15px/17px 'Liberation Serif',serif;color:#c4c4c4;white-space:nowrap">T<span style="font-size:8px;position:relative;top:1px;vertical-align:baseline">1</span></div>
<div class="a" style="left:774px;top:324px;width:30px;text-align:center;font: bold 15px/17px 'Liberation Serif',serif;color:#c4c4c4;white-space:nowrap"><u style="text-underline-offset:2px">T</u></div>
<div class="a" style="left:797px;top:324px;width:30px;text-align:center;font: bold 15px/17px 'Liberation Serif',serif;color:#c4c4c4;white-space:nowrap"><s>T</s></div>
<div class="a" style="left:614px;top:349px;width:235px;height:1px;background:#3e3e3e;border-bottom:1px solid #5c5c5c"></div>
<div class="a" style="left:630px;top:356px;width:30px;text-align:center;font: 16px/17px 'Liberation Serif',serif;color:#858585;white-space:nowrap">fi</div>
<div class="a" style="left:654px;top:356px;width:30px;text-align:center;font:italic 16px/17px 'Liberation Serif',serif;color:#858585;white-space:nowrap">σ</div>
<div class="a" style="left:678px;top:356px;width:30px;text-align:center;font: 16px/17px 'Liberation Serif',serif;color:#858585;white-space:nowrap">st</div>
<div class="a" style="left:702px;top:356px;width:30px;text-align:center;font:italic 16px/17px 'Liberation Serif',serif;color:#858585;white-space:nowrap">A</div>
<div class="a" style="left:726px;top:356px;width:30px;text-align:center;font:italic 16px/17px 'Liberation Serif',serif;color:#858585;white-space:nowrap">aa</div>
<div class="a" style="left:749px;top:356px;width:30px;text-align:center;font:italic 16px/17px 'Liberation Serif',serif;color:#858585;white-space:nowrap">T</div>
<div class="a" style="left:773px;top:356px;width:30px;text-align:center;font: 16px/17px 'Liberation Serif',serif;color:#d0d0d0;white-space:nowrap">1<span style="font-size:8px;position:relative;top:-6px;vertical-align:baseline">st</span></div>
<div class="a" style="left:797px;top:356px;width:30px;text-align:center;font: 16px/17px 'Liberation Serif',serif;color:#d0d0d0;white-space:nowrap">½</div>
<div class="a" style="left:734px;top:358px;width:14px;height:1px;background:#858585"></div>
<svg class="a" style="left:745px;top:355px" width="5" height="6"><path d="M0 0.5 L4 3 L0 5.5" fill="none" stroke="#858585"/></svg>
<div class="a" style="left:614px;top:380px;width:235px;height:1px;background:#3e3e3e;border-bottom:1px solid #5c5c5c"></div>
<div class="a" style="left:621px;top:386px;width:135px;height:21px;background:linear-gradient(#5a5a5a,#535353);border:1px solid #3a3a3a;border-radius:3px"></div>
<div class="a" style="left:629px;top:388px;font-size:12px;line-height:16px;color:#bcbcbc">美国英语</div>
<svg class="a" style="left:745px;top:391px" width="6" height="10"><path d="M0 4 L3 0.5 L6 4Z M0 6 L3 9.5 L6 6Z" fill="#c0c0c0"/></svg>
<div class="a" style="left:762px;top:386px;font:11px/11px 'Liberation Sans',sans-serif;color:#d0d0d0">a</div>
<div class="a" style="left:768px;top:389px;font:15px/15px 'Liberation Sans',sans-serif;color:#d0d0d0">a</div>
<div class="a" style="left:782px;top:386px;width:56px;height:21px;background:linear-gradient(#5a5a5a,#535353);border:1px solid #3a3a3a;border-radius:3px"></div>
<div class="a" style="left:790px;top:388px;font-size:12px;line-height:16px;color:#bcbcbc">平滑</div>
<svg class="a" style="left:826px;top:391px" width="6" height="10"><path d="M0 4 L3 0.5 L6 4Z M0 6 L3 9.5 L6 6Z" fill="#c0c0c0"/></svg>
<div class="a" style="left:604px;top:538px;width:245px;height:231px;background:#535353;border-top:1px solid #2c2c2c"></div>
<div class="a" style="left:604px;top:539px;width:245px;height:17px;background:#3d3d3d"></div>
<div class="a tab" style="left:604px;top:539px;width:39px;height:17px;background:#535353;color:#e4e4e4;border-top:1px solid #5e5e5e">图层</div>
<div class="a tab" style="left:644px;top:539px;width:38px;height:17px;background:#454545;color:#a8a8a8;border-right:1px solid #2e2e2e">通道</div>
<div class="a tab" style="left:683px;top:539px;width:39px;height:17px;background:#454545;color:#a8a8a8;border-right:1px solid #2e2e2e">路径</div>
<svg class="a" style="left:830px;top:543px" width="15" height="9"><path d="M0 2 H5 L2.5 5Z" fill="#d8d8d8"/><rect x="6" y="0" width="8" height="1" fill="#d8d8d8"/><rect x="6" y="2" width="8" height="1" fill="#d8d8d8"/><rect x="6" y="4" width="8" height="1" fill="#d8d8d8"/><rect x="6" y="6" width="8" height="1" fill="#d8d8d8"/></svg>
<div class="a" style="left:608px;top:560px;width:71px;height:20px;background:linear-gradient(#5a5a5a,#535353);border:1px solid #3a3a3a;border-radius:3px"></div>
<svg class="a" style="left:614px;top:565px" width="10" height="10"><circle cx="6" cy="4" r="3" fill="none" stroke="#909090" stroke-width="1.2"/><path d="M4 6 L1 9" stroke="#909090" stroke-width="1.4"/></svg>
<div class="a" style="left:631px;top:561px;font-size:12px;line-height:16px;color:#9a9a9a">类型</div>
<svg class="a" style="left:668px;top:565px" width="6" height="10"><path d="M0 4 L3 0.5 L6 4Z M0 6 L3 9.5 L6 6Z" fill="#a0a0a0"/></svg>
<svg class="a" style="left:700px;top:563px" width="13" height="12"><rect x="0.5" y="0.5" width="12" height="11" fill="none" stroke="#7a7a7a"/><path d="M2 10 L5 6 L7 8 L9 5 L11 10Z" fill="#7a7a7a"/><circle cx="9" cy="3" r="1" fill="#7a7a7a"/></svg>
<svg class="a" style="left:724px;top:563px" width="12" height="12"><circle cx="6" cy="6" r="5" fill="#7a7a7a"/><path d="M2.5 9.5 L9.5 2.5 A5 5 0 0 1 2.5 9.5Z" fill="#535353"/></svg>
<div class="a" style="left:747px;top:562px;font:bold 14px/16px 'Liberation Serif',serif;color:#7a7a7a">T</div>
<svg class="a" style="left:771px;top:563px" width="13" height="13"><rect x="2" y="2" width="9" height="9" fill="none" stroke="#7a7a7a"/><rect x="0" y="0" width="3" height="3" fill="#7a7a7a"/><rect x="10" y="0" width="3" height="3" fill="#7a7a7a"/><rect x="0" y="10" width="3" height="3" fill="#7a7a7a"/><rect x="10" y="10" width="3" height="3" fill="#7a7a7a"/></svg>
<svg class="a" style="left:796px;top:562px" width="12" height="14"><path d="M4 1 H9 L11 3 V13 H4Z" fill="#7a7a7a"/><rect x="1" y="6" width="5" height="7" fill="#535353" stroke="#7a7a7a"/></svg>
<div class="a" style="left:830px;top:561px;width:10px;height:19px;background:#3e3e3e;border:1px solid #363636;border-radius:2px"></div>
<div class="a" style="left:831px;top:562px;width:8px;height:8px;background:#6a6a6a;border-radius:1px"></div>
<div class="a" style="left:604px;top:583px;width:245px;height:1px;background:#3e3e3e;border-bottom:1px solid #5c5c5c"></div>
<div class="a" style="left:608px;top:587px;width:111px;height:21px;background:linear-gradient(#5a5a5a,#535353);border:1px solid #3a3a3a;border-radius:3px"></div>
<div class="a" style="left:617px;top:589px;font-size:12px;line-height:16px;color:#d8d8d8">正常</div>
<svg class="a" style="left:708px;top:593px" width="6" height="10"><path d="M0 4 L3 0.5 L6 4Z M0 6 L3 9.5 L6 6Z" fill="#c0c0c0"/></svg>
<div class="a" style="left:727px;top:589px;font-size:12px;line-height:16px;color:#c8c8c8">不透明度<span style="font-family:'Liberation Sans',sans-serif;margin-left:1px">:</span></div>
<div class="a" style="left:784px;top:587px;width:55px;height:21px;background:#454545;border:1px solid #3a3a3a;border-radius:2px"></div>
<div class="a" style="left:787px;top:590px;font-size:11px;line-height:15px;color:#7a7a7a" class="lat">100%</div>
<div class="a" style="left:820px;top:588px;width:18px;height:19px;background:linear-gradient(#5e5e5e,#575757);border-left:1px solid #3a3a3a"></div>
<svg class="a" style="left:826px;top:596px" width="7" height="4"><path d="M0 0 H7 L3.5 4Z" fill="#909090"/></svg>
<div class="a" style="left:604px;top:611px;width:245px;height:1px;background:#3e3e3e;border-bottom:1px solid #5c5c5c"></div>
<div class="a" style="left:610px;top:617px;font-size:12px;line-height:16px;color:#c8c8c8">锁定<span style="font-family:'Liberation Sans',sans-serif;margin-left:1px">:</span></div>
<svg class="a" style="left:648px;top:620px" width="11" height="11"><rect width="11" height="11" fill="#9a9a9a"/><path d="M0 0h3v3H0zM6 0h3v3H6zM3 3h3v3H3zM9 3h2v3H9zM0 6h3v3H0zM6 6h3v3H6zM3 9h3v2H3zM9 9h2v2H9z" fill="#6a6a6a"/></svg>
<svg class="a" style="left:667px;top:617px" width="17" height="16"><path d="M16 1 L8 10" stroke="#8a8a8a" stroke-width="2"/><path d="M8 9 Q5 9 4 12 Q3 14 0 15 Q7 16 9 11Z" fill="#8a8a8a"/></svg>
<svg class="a" style="left:691px;top:618px" width="14" height="14"><path d="M7 1 V13 M1 7 H13" stroke="#8a8a8a" stroke-width="1.2"/><path d="M7 0 L4.5 3 H9.5Z M7 14 L4.5 11 H9.5Z M0 7 L3 4.5 V9.5Z M14 7 L11 4.5 V9.5Z" fill="#8a8a8a"/></svg>
<svg class="a" style="left:714px;top:618px" width="11" height="14"><path d="M2.5 6 V4 Q2.5 1 5.5 1 Q8.5 1 8.5 4 V6" fill="none" stroke="#8a8a8a" stroke-width="1.5"/><rect x="0.5" y="6" width="10" height="7.5" fill="#8a8a8a"/></svg>
<div class="a" style="left:750px;top:617px;font-size:12px;line-height:16px;color:#c8c8c8">填充<span style="font-family:'Liberation Sans',sans-serif;margin-left:1px">:</span></div>
<div class="a" style="left:784px;top:616px;width:55px;height:21px;background:#454545;border:1px solid #3a3a3a;border-radius:2px"></div>
<div class="a" style="left:787px;top:619px;font-size:11px;line-height:15px;color:#7a7a7a">100%</div>
<div class="a" style="left:820px;top:617px;width:18px;height:19px;background:linear-gradient(#5e5e5e,#575757);border-left:1px solid #3a3a3a"></div>
<svg class="a" style="left:826px;top:625px" width="7" height="4"><path d="M0 0 H7 L3.5 4Z" fill="#909090"/></svg>
<div class="a" style="left:604px;top:640px;width:245px;height:1px;background:#3e3e3e"></div>
<div class="a" style="left:604px;top:641px;width:229px;height:108px;background:#474747"></div>
<div class="a" style="left:833px;top:641px;width:15px;height:108px;background:linear-gradient(90deg,#3f3f3f,#454545)"></div>
<div class="a" style="left:604px;top:641px;width:31px;height:27px;background:#535353;border-right:1px solid #3e3e3e;border-bottom:1px solid #3e3e3e"></div>
<div class="a" style="left:635px;top:641px;width:198px;height:27px;background:#5a687e;border-bottom:1px solid #3e3e3e"></div>
<svg class="a" style="left:612px;top:649px" width="14" height="10"><path d="M0.5 5 Q7 -1.5 13.5 5 Q7 11.5 0.5 5Z" fill="#cfcfcf"/><circle cx="7" cy="5" r="3.2" fill="#4a4a4a"/><circle cx="7" cy="5" r="1.6" fill="#222"/><circle cx="8" cy="4" r="0.7" fill="#ddd"/></svg>
<div class="a" style="left:638px;top:645px;width:32px;height:19px;background:#111;border:1px solid #0e0e0e;overflow:hidden"><div class="a" style="left:0;top:0;width:30px;height:17px;background:linear-gradient(180deg,#a8d0d4 0px,#8fb8b8 5px,#5a7a74 8px,#6a7a78 11px,#4a5a5a 17px)"></div><div class="a" style="left:18px;top:0;width:12px;height:9px;background:#2e4a26;border-radius:0 0 0 6px"></div><div class="a" style="left:6px;top:5px;width:19px;height:8px;background:#e8b818;border-radius:4px 6px 2px 2px;box-shadow:inset 0 -2px 0 #8a6a10"></div><div class="a" style="left:3px;top:7px;width:6px;height:5px;background:#c89a18;border-radius:2px"></div></div>
<div class="a" style="left:682px;top:646px;font:italic 11.5px/15px 'Liberation Sans',sans-serif;color:#f4f4f4;-webkit-text-stroke:0.2px #fff">背景</div>
<svg class="a" style="left:806px;top:648px" width="10" height="13"><path d="M2.5 6 V4 Q2.5 1 5 1 Q7.5 1 7.5 4 V6" fill="none" stroke="#e0e0e0" stroke-width="1.3"/><rect x="0.5" y="6" width="9" height="6.5" fill="none" stroke="#e0e0e0"/></svg>
<div class="a" style="left:604px;top:749px;width:245px;height:20px;background:#535353;border-top:1px solid #5c5c5c"></div>
<svg class="a" style="left:645px;top:754px" width="14" height="9"><rect x="0.75" y="1.75" width="7" height="5.5" rx="2.7" fill="none" stroke="#8a8a8a" stroke-width="1.5"/><rect x="6" y="1.75" width="7" height="5.5" rx="2.7" fill="none" stroke="#8a8a8a" stroke-width="1.5"/></svg>
<div class="a" style="left:672px;top:751px;font:italic 14px/15px 'Liberation Serif',serif;color:#8a8a8a">fx</div>
<svg class="a" style="left:700px;top:753px" width="13" height="11"><rect width="13" height="11" fill="#8a8a8a"/><circle cx="6.5" cy="5.5" r="3" fill="#2e2e2e"/></svg>
<svg class="a" style="left:727px;top:752px" width="13" height="13"><circle cx="6" cy="6" r="5.3" fill="none" stroke="#8a8a8a" stroke-width="1.4"/><path d="M2.3 9.7 L9.7 2.3 A5.3 5.3 0 0 1 2.3 9.7Z" fill="#8a8a8a"/></svg>
<svg class="a" style="left:753px;top:753px" width="14" height="11"><path d="M0 1 H5 L6 2.5 H13 V11 H0Z" fill="#8a8a8a"/></svg>
<svg class="a" style="left:780px;top:753px" width="13" height="12"><path d="M0 2 H11 V12 H5 L0 7Z" fill="#8a8a8a"/><path d="M3 0 H13 V9" fill="none" stroke="#8a8a8a"/></svg>
<svg class="a" style="left:807px;top:752px" width="12" height="13"><path d="M1 3 H11 M4 3 V1 H8 V3" fill="none" stroke="#8a8a8a"/><path d="M2 4 H10 L9.5 12 H2.5Z" fill="none" stroke="#8a8a8a"/><path d="M4.5 5 V11 M7.5 5 V11" stroke="#8a8a8a"/></svg>
<div class="a" style="left:851px;top:78px;width:37px;height:691px;background:#535353"></div>
<div class="a" style="left:888px;top:66px;width:1px;height:703px;background:#2e2e2e"></div>
<div class="a" style="left:851px;top:78px;width:37px;height:1px;background:#2e2e2e"></div>
<div class="a" style="left:851px;top:119px;width:37px;height:1px;background:#2c2c2c"></div>
<div class="a" style="left:860px;top:82px;width:19px;height:3px;background:repeating-linear-gradient(90deg,#2e2e2e 0 1px,transparent 1px 2px)"></div>
<div class="a" style="left:851px;top:160px;width:37px;height:1px;background:#2c2c2c"></div>
<div class="a" style="left:860px;top:124px;width:19px;height:3px;background:repeating-linear-gradient(90deg,#2e2e2e 0 1px,transparent 1px 2px)"></div>
<div class="a" style="left:851px;top:229px;width:37px;height:1px;background:#2c2c2c"></div>
<div class="a" style="left:860px;top:165px;width:19px;height:3px;background:repeating-linear-gradient(90deg,#2e2e2e 0 1px,transparent 1px 2px)"></div>
<svg class="a" style="left:863px;top:93px" width="16" height="18"><rect x="0.5" y="0.5" width="5" height="4" fill="none" stroke="#b0b0b0"/><rect x="0.5" y="6.5" width="5" height="4" fill="none" stroke="#b0b0b0"/><rect x="0" y="12" width="6" height="5" fill="#b0b0b0"/><path d="M9 3 Q14 3 13 9 Q12 13 9 15" fill="none" stroke="#b0b0b0" stroke-width="1.6"/><path d="M7 4 L10 1 V6Z" fill="#b0b0b0"/></svg>
<svg class="a" style="left:862px;top:133px" width="16" height="18"><path d="M5 1 L10 3 V8 L5 10 L0 8 V3Z" fill="none" stroke="#b0b0b0"/><path d="M0 3 L5 5 L10 3 M5 5 V10" fill="none" stroke="#b0b0b0"/><rect x="11" y="2" width="4" height="3" fill="#b0b0b0"/><rect x="11" y="6" width="4" height="3" fill="#b0b0b0"/><rect x="0" y="12" width="16" height="5" fill="#b0b0b0"/><path d="M10 14 H14 L12 16Z" fill="#333"/></svg>
<div class="a" style="left:855px;top:172px;width:29px;height:24px;background:#3a3a3a;border:1px solid #2e2e2e;border-radius:3px"></div>
<div class="a" style="left:861px;top:174px;font:19px/20px 'Liberation Sans',sans-serif;color:#a8a8a8">A</div>
<div class="a" style="left:875px;top:176px;width:1px;height:16px;background:#d0d0d0"></div>
<div class="a" style="left:863px;top:202px;font:bold 18px/20px 'Liberation Sans',sans-serif;color:#c0c0c0">¶</div>
<div class="a" style="left:65px;top:278px;width:59px;height:282px;background:linear-gradient(180deg,#78b8bc 0px,#82c0c1 35px,#8ac5c3 60px,#a4d2c8 75px,#b2d8cc 92px,#b0d6cc 100px,#0b1319 101px,#0b1319 111px,#1f3a48 112px,#27404c 118px,#d4e4e0 119px,#dbe8e4 131px,#a4aaa8 132px,#8a9294 135px,#3d4c56 137px,#34444e 147px,#4e5e62 152px,#586868 168px,#52626a 200px,#485a5e 240px,#3e5054 282px)"></div>
<div class="a" style="left:104px;top:397px;width:17px;height:8px;background:#0e1216;border-left:2px solid #2a5ab0"></div>
<div class="a" style="left:65px;top:410px;width:59px;height:4px;background:linear-gradient(90deg,#b8bcb8,#9aa4a4);transform:skewY(-4deg)"></div>
<div class="a" style="left:65px;top:420px;width:59px;height:16px;overflow:hidden"><div class="a" style="left:-4px;top:10px;width:28px;height:2.5px;background:#8a9a30;transform:rotate(-14deg);transform-origin:left;opacity:0.8"></div></div>
<div class="a" style="left:88px;top:452px;width:36px;height:1px;background:#7e908e;opacity:0.5"></div>
<div class="a" style="left:82px;top:453px;width:5px;height:7px;background:#88a09e;border-radius:3px;opacity:0.6"></div>
<div class="a" style="left:545px;top:278px;width:20px;height:282px;background:linear-gradient(180deg,#1f2a1c 0px,#2e3a24 20px,#26321f 45px,#3a4a2c 80px,#34432a 110px,#2e3a26 132px,#1e2620 137px,#c8d0ca 138px,#c8d0ca 140px,#3e4844 141px,#c0c8c2 143px,#c0c8c2 145px,#404a46 146px,#c4ccc6 149px,#c4ccc6 151px,#444e4a 152px,#b8c0bc 155px,#b8c0bc 157px,#46504c 158px,#b0b8b4 160px,#b0b8b4 162px,#4a5652 163px,#4e5a56 166px,#b4bcb8 168px,#a4aca8 170px,#556462 172px,#55666a 180px,#4c5e62 220px,#425458 282px)"></div>
<div class="a" style="left:123px;top:233px;width:423px;height:356px;background:#ececec;border:1px solid #1c1c1c;box-shadow:inset 0 0 0 1px #fff"></div>
<div class="a" style="left:124px;top:234px;width:421px;height:24px;background:#ffffff"></div>
<div class="a dtx" style="left:127px;top:237px">图像大小</div>
<svg class="a" style="left:524px;top:239px" width="12" height="12"><path d="M1 1 L11 11 M11 1 L1 11" stroke="#111" stroke-width="1.1"/></svg>
<div class="a" style="left:135px;top:276px;width:289px;height:79px;border:1px solid #a4a4a4;box-shadow:1px 1px 0 #fff,inset 1px 1px 0 #fff"></div>
<div class="a" style="left:146px;top:270px;width:98px;height:14px;background:#ececec"></div>
<div class="a dtx" style="left:151px;top:269px">像素大小<span class="dl" style="letter-spacing:0">:6.44M</span></div>
<div class="a" style="left:134px;top:374px;width:293px;height:111px;border:1px solid #a4a4a4;box-shadow:1px 1px 0 #fff,inset 1px 1px 0 #fff"></div>
<div class="a" style="left:150px;top:368px;width:71px;height:14px;background:#ececec"></div>
<div class="a dtx" style="left:156px;top:367px;letter-spacing:2.5px">文档大小<span class="dl">:</span></div>
<div class="a dtx" style="left:161px;top:299px">宽度<span class="dl">(<u>W</u>):</span></div>
<div class="a dtx" style="left:164px;top:329px">高度<span class="dl">(<u>H</u>):</span></div>
<div class="a dtx" style="left:164px;top:397px">宽度<span class="dl">(<u>D</u>):</span></div>
<div class="a dtx" style="left:164px;top:427px">高度<span class="dl">(<u>G</u>):</span></div>
<div class="a dtx" style="left:153px;top:457px">分辨率<span class="dl">(<u>R</u>):</span></div>
<div class="a" style="left:215px;top:297px;width:70px;height:20px;background:#fff;border:1px solid #0078d7"></div>
<div class="a" style="left:220px;top:300px;width:29px;height:13px;background:#0078d7"></div>
<div class="a dl" style="left:220px;top:300px;color:#fff">2000</div>
<div class="a" style="left:215px;top:327px;width:70px;height:20px;background:#fff;border:1px solid #7a7a7a"></div>
<div class="a dl" style="left:220px;top:330px;color:#000">1125</div>
<div class="a" style="left:215px;top:395px;width:70px;height:20px;background:#fff;border:1px solid #7a7a7a"></div>
<div class="a dl" style="left:220px;top:398px;color:#000">70.56</div>
<div class="a" style="left:215px;top:425px;width:70px;height:20px;background:#fff;border:1px solid #7a7a7a"></div>
<div class="a dl" style="left:220px;top:428px;color:#000">39.69</div>
<div class="a" style="left:215px;top:455px;width:70px;height:20px;background:#fff;border:1px solid #7a7a7a"></div>
<div class="a dl" style="left:220px;top:458px;color:#000">72</div>
<div class="a" style="left:293px;top:296px;width:75px;height:22px;background:#fff;border:1px solid #7a7a7a"></div>
<div class="a dtx" style="left:300px;top:300px">像素</div>
<svg class="a" style="left:355px;top:305px" width="10" height="6"><path d="M0.5 0.5 L4.5 4.5 L8.5 0.5" fill="none" stroke="#333" stroke-width="1"/></svg>
<div class="a" style="left:293px;top:326px;width:75px;height:22px;background:#fff;border:1px solid #7a7a7a"></div>
<div class="a dtx" style="left:300px;top:330px">像素</div>
<svg class="a" style="left:355px;top:335px" width="10" height="6"><path d="M0.5 0.5 L4.5 4.5 L8.5 0.5" fill="none" stroke="#333" stroke-width="1"/></svg>
<div class="a" style="left:293px;top:394px;width:94px;height:22px;background:#fff;border:1px solid #7a7a7a"></div>
<div class="a dtx" style="left:300px;top:398px">厘米</div>
<svg class="a" style="left:374px;top:403px" width="10" height="6"><path d="M0.5 0.5 L4.5 4.5 L8.5 0.5" fill="none" stroke="#333" stroke-width="1"/></svg>
<div class="a" style="left:293px;top:424px;width:94px;height:22px;background:#fff;border:1px solid #7a7a7a"></div>
<div class="a dtx" style="left:300px;top:428px">厘米</div>
<svg class="a" style="left:374px;top:433px" width="10" height="6"><path d="M0.5 0.5 L4.5 4.5 L8.5 0.5" fill="none" stroke="#333" stroke-width="1"/></svg>
<div class="a" style="left:293px;top:454px;width:94px;height:22px;background:#fff;border:1px solid #7a7a7a"></div>
<div class="a dtx" style="left:300px;top:458px">像素<span class="dl">/</span>英寸</div>
<svg class="a" style="left:374px;top:463px" width="10" height="6"><path d="M0.5 0.5 L4.5 4.5 L8.5 0.5" fill="none" stroke="#333" stroke-width="1"/></svg>
<div class="a" style="left:376px;top:307px;width:10px;height:30px;border:2px solid #888;border-left:none"></div>
<div class="a" style="left:395px;top:405px;width:10px;height:31px;border:2px solid #888;border-left:none"></div>
<svg class="a" style="left:390px;top:314px" width="9" height="15"><path d="M1.5 6 V4.5 A3 3 0 0 1 7.5 4.5 V6 M1.5 9 V10.5 A3 3 0 0 0 7.5 10.5 V9" fill="none" stroke="#333" stroke-width="1.8"/><path d="M4.5 4.5 V10.5" stroke="#333" stroke-width="1.8"/></svg>
<svg class="a" style="left:409px;top:413px" width="9" height="15"><path d="M1.5 6 V4.5 A3 3 0 0 1 7.5 4.5 V6 M1.5 9 V10.5 A3 3 0 0 0 7.5 10.5 V9" fill="none" stroke="#333" stroke-width="1.8"/><path d="M4.5 4.5 V10.5" stroke="#333" stroke-width="1.8"/></svg>
<div class="a" style="left:145px;top:448px;width:268px;height:34px;border:3px solid #ee4a64;border-radius:5px"></div>
<div class="a" style="left:443px;top:275px;width:91px;height:18px;background:#e1e1e1;border:2px solid #0078d7"></div>
<div class="a dtx" style="left:443px;top:277px;width:91px;text-align:center">确定</div>
<div class="a" style="left:443px;top:303px;width:91px;height:18px;background:#e1e1e1;border:1px solid #adadad"></div>
<div class="a dtx" style="left:443px;top:305px;width:91px;text-align:center">复位</div>
<div class="a" style="left:443px;top:338px;width:91px;height:18px;background:#e1e1e1;border:1px solid #adadad"></div>
<div class="a dtx" style="left:443px;top:340px;width:91px;text-align:center">自动<span class="dl">(<u>A</u>)...</span></div>
<div class="a" style="left:134px;top:494px;width:13px;height:13px;background:#fff;border:1px solid #333"></div>
<svg class="a" style="left:135px;top:495px" width="11" height="11"><path d="M1.5 5.5 L4 8.5 L9.5 2" fill="none" stroke="#333" stroke-width="1.3"/></svg>
<div class="a dtx" style="left:150px;top:493px">缩放样式<span class="dl">(<u>Y</u>)</span></div>
<div class="a" style="left:134px;top:515px;width:13px;height:13px;background:#fff;border:1px solid #333"></div>
<svg class="a" style="left:135px;top:516px" width="11" height="11"><path d="M1.5 5.5 L4 8.5 L9.5 2" fill="none" stroke="#333" stroke-width="1.3"/></svg>
<div class="a dtx" style="left:150px;top:514px">约束比例<span class="dl">(<u>C</u>)</span></div>
<div class="a" style="left:134px;top:536px;width:13px;height:13px;background:#fff;border:1px solid #333"></div>
<svg class="a" style="left:135px;top:537px" width="11" height="11"><path d="M1.5 5.5 L4 8.5 L9.5 2" fill="none" stroke="#333" stroke-width="1.3"/></svg>
<div class="a dtx" style="left:150px;top:535px">重定图像像素<span class="dl">(<u>I</u>):</span></div>
<div class="a" style="left:202px;top:557px;width:225px;height:22px;background:#fff;border:1px solid #7a7a7a"></div>
<div class="a dtx" style="left:208px;top:561px">两次立方（自动）</div>
<svg class="a" style="left:413px;top:565px" width="10" height="6"><path d="M0.5 0.5 L4.5 4.5 L8.5 0.5" fill="none" stroke="#333" stroke-width="1"/></svg>
</body></html>
